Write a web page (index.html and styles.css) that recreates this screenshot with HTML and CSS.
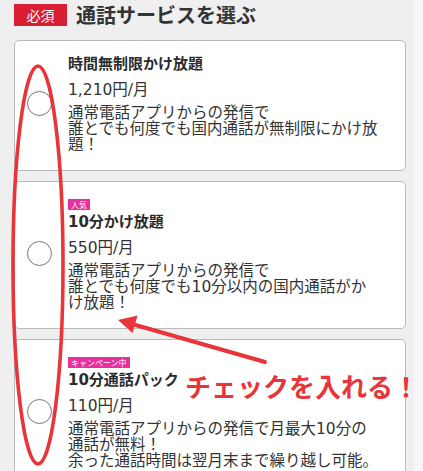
FILE: index.html
```html
<!DOCTYPE html>
<html lang="ja">
<head>
<meta charset="utf-8">
<title>通話サービスを選ぶ</title>
<link rel="stylesheet" href="styles.css">
</head>
<body>
<div class="page">
  <main class="main">
    <header class="head">
      <span class="req">必須</span>
      <h1 class="head-title">通話サービスを選ぶ</h1>
    </header>
    <div class="list">
      <label class="card">
        <span class="radio"></span>
        <div class="body">
          <div class="title">時間無制限かけ放題</div>
          <div class="price">1,210円/月</div>
          <div class="desc">通常電話アプリからの発信で<br>誰とでも何度でも国内通話が無制限にかけ放<br>題！</div>
        </div>
      </label>
      <label class="card">
        <span class="radio"></span>
        <div class="body">
          <span class="tag">人気</span>
          <div class="title">10分かけ放題</div>
          <div class="price">550円/月</div>
          <div class="desc">通常電話アプリからの発信で<br>誰とでも何度でも10分以内の国内通話がか<br>け放題！</div>
        </div>
      </label>
      <label class="card">
        <span class="radio"></span>
        <div class="body">
          <span class="tag">キャンペーン中</span>
          <div class="title">10分通話パック</div>
          <div class="price">110円/月</div>
          <div class="desc">通常電話アプリからの発信で月最大10分の<br>通話が無料！<br>余った通話時間は翌月末まで繰り越し可能。</div>
        </div>
      </label>
    </div>
  </main>
  <div class="scroll"></div>
</div>
<svg class="marks" width="423" height="471" viewBox="0 0 423 471" xmlns="http://www.w3.org/2000/svg">
  <ellipse cx="38" cy="265" rx="25" ry="199" fill="none" stroke="#e8353a" stroke-width="3.6"/>
  <line x1="265" y1="362" x2="132" y2="324" stroke="#e8353a" stroke-width="4" stroke-linecap="round"/>
  <polygon points="118,320 137.5,315.5 132.5,333" fill="#e8353a"/>
</svg>
<div class="note">チェックを入れる！</div>
</body>
</html>
```

FILE: styles.css
```css
html, body {
  margin: 0;
  padding: 0;
}
body {
  width: 423px;
  height: 471px;
  overflow: hidden;
  position: relative;
  background: #efefef;
  font-family: "Noto Sans CJK JP", "Noto Sans", sans-serif;
  color: #333;
}
.page {
  display: flex;
  height: 471px;
}
.main {
  width: 392px;
  padding: 4px 8px 0 14px;
}
.scroll {
  width: 9px;
  background: #f6f6f6;
}
.head {
  display: flex;
  align-items: center;
  gap: 9px;
  height: 22px;
}
.req {
  display: flex;
  align-items: center;
  justify-content: center;
  width: 53px;
  height: 22px;
  background: #d71e33;
  color: #fff;
  font-size: 14px;
  line-height: 22px;
}
.head-title {
  margin: 0;
  font-size: 20px;
  font-weight: 700;
  line-height: 22px;
  color: #333;
}
.list {
  display: flex;
  flex-direction: column;
  gap: 10px;
  margin-top: 14px;
}
.card {
  display: grid;
  grid-template-columns: 53px 1fr;
  align-items: center;
  background: #fff;
  border: 1px solid #bababa;
  border-radius: 5px;
  padding: 13px 16px 17px 0;
  font-family: "DejaVu Sans", "Noto Sans CJK JP", sans-serif;
}
.radio {
  width: 23px;
  height: 23px;
  border: 1.3px solid #777;
  border-radius: 50%;
  margin-left: 12px;
}
.body {
  display: flex;
  flex-direction: column;
  align-items: flex-start;
}
.tag {
  margin-top: 4px;
  margin-bottom: 2px;
  background: #e6309c;
  color: #fff;
  font-family: "Noto Sans CJK JP", sans-serif;
  font-size: 8px;
  line-height: 11px;
  padding: 0 3px;
}
.title {
  font-size: 15px;
  font-weight: 700;
  line-height: 20px;
  color: #2b2b2b;
}
.price {
  margin-top: 6px;
  font-size: 15.5px;
  line-height: 20px;
}
.desc {
  margin-top: 5px;
  font-size: 15.5px;
  line-height: 16px;
  white-space: nowrap;
}
.marks {
  position: absolute;
  left: 0;
  top: 0;
  pointer-events: none;
}
.note {
  position: absolute;
  left: 185px;
  top: 373px;
  font-size: 26px;
  line-height: 26px;
  font-weight: 700;
  color: #e8353a;
  white-space: nowrap;
}
```
